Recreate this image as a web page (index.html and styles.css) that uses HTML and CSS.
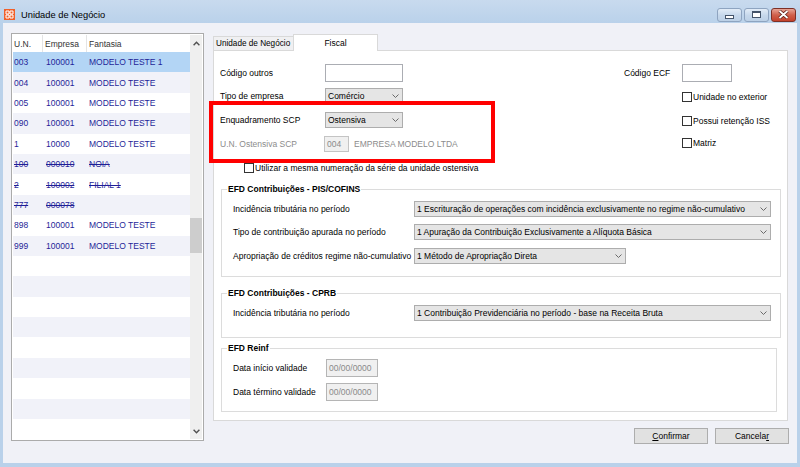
FILE: index.html
```html
<!doctype html>
<html>
<head>
<meta charset="utf-8">
<title>Unidade de Negócio</title>
<link rel="stylesheet" href="styles.css">
</head>
<body>
<div class="janela">
	<div class="titulo">
		<svg class="ico" viewBox="0 0 11 11"><rect width="11" height="11" fill="#f0602a"/><path d="M2 2h3v3H2zM6 2h3v3H6zM2 6h3v3H2zM6 6h3v3H6z" fill="none" stroke="#fff" stroke-width="1"/></svg>
		<span class="titulo-txt">Unidade de Negócio</span>
		<div class="botoes">
			<span class="bt bt-min"><i></i></span>
			<span class="bt bt-max"><i></i></span>
			<span class="bt bt-fechar"><svg width="11" height="9" viewBox="0 0 11 9"><path d="M1.5 1 9.5 8M9.5 1 1.5 8" stroke="#5a1f18" stroke-width="3.4"/><path d="M1.5 1 9.5 8M9.5 1 1.5 8" stroke="#fff" stroke-width="1.8"/></svg></span>
		</div>
	</div>
	<div class="cliente">
		<div class="lista">
			<div class="lista-corpo">
				<div class="cab"><span class="c1">U.N.</span><span class="c2">Empresa</span><span class="c3">Fantasia</span></div>
				<div class="linha sel"><span class="c1">003</span><span class="c2">100001</span><span class="c3">MODELO TESTE 1</span></div>
				<div class="linha"><span class="c1">004</span><span class="c2">100001</span><span class="c3">MODELO TESTE</span></div>
				<div class="linha"><span class="c1">005</span><span class="c2">100001</span><span class="c3">MODELO TESTE</span></div>
				<div class="linha"><span class="c1">090</span><span class="c2">100001</span><span class="c3">MODELO TESTE</span></div>
				<div class="linha"><span class="c1">1</span><span class="c2">10000</span><span class="c3">MODELO TESTE</span></div>
				<div class="linha riscado"><span class="c1">100</span><span class="c2">000010</span><span class="c3">NOIA</span></div>
				<div class="linha riscado"><span class="c1">2</span><span class="c2">100002</span><span class="c3">FILIAL 1</span></div>
				<div class="linha riscado"><span class="c1">777</span><span class="c2">000078</span><span class="c3"></span></div>
				<div class="linha"><span class="c1">898</span><span class="c2">100001</span><span class="c3">MODELO TESTE</span></div>
				<div class="linha"><span class="c1">999</span><span class="c2">100001</span><span class="c3">MODELO TESTE</span></div>
				<div class="linha"></div>
				<div class="linha"></div>
				<div class="linha"></div>
				<div class="linha"></div>
				<div class="linha"></div>
				<div class="linha"></div>
				<div class="linha"></div>
				<div class="linha"></div>
				<div class="linha"></div>
			</div>
			<div class="rolagem">
				<svg class="seta-rol" width="7" height="5" viewBox="0 0 7 5"><path d="M.6 4.2 3.5 1.3 6.4 4.2" fill="none" stroke="#505050" stroke-width="1.4"/></svg>
				<div class="polegar"></div>
				<svg class="seta-rol baixo" width="7" height="5" viewBox="0 0 7 5"><path d="M.6.8 3.5 3.7 6.4.8" fill="none" stroke="#505050" stroke-width="1.4"/></svg>
			</div>
		</div>

		<div class="direita">
			<div class="abas">
				<div class="aba">Unidade de Negócio</div>
				<div class="aba aba-on">Fiscal</div>
			</div>
			<div class="painel">
				<div class="topo">
					<div class="campos">
						<div class="lin l18"><span class="rot">Código outros</span><div class="caixa"></div></div>
						<div class="lin l16 mt6"><span class="rot">Tipo de empresa</span><div class="combo w78"><span>Comércio</span><svg class="seta" width="7" height="4" viewBox="0 0 7 4"><path d="M.5.5 3.5 3.5 6.5.5" fill="none" stroke="#6a6a6a"/></svg></div></div>
						<div class="lin l16 mt8"><span class="rot">Enquadramento SCP</span><div class="combo w78"><span>Ostensiva</span><svg class="seta" width="7" height="4" viewBox="0 0 7 4"><path d="M.5.5 3.5 3.5 6.5.5" fill="none" stroke="#6a6a6a"/></svg></div></div>
						<div class="lin l16 mt8"><span class="rot rot-off">U.N. Ostensiva SCP</span><div class="caixa-off cod">004</div><span class="txt-off">EMPRESA MODELO LTDA</span></div>
						<div class="lin l10 mt11 recuo"><span class="quad"></span><span>Utilizar a mesma numeração da série da unidade ostensiva</span></div>
					</div>
					<div class="lado">
						<span class="rot-ecf">Código ECF</span><div class="caixa ecf"></div>
						<div class="marca m10"><span class="quad"></span><span>Unidade no exterior</span></div>
						<div class="marca m14"><span class="quad"></span><span>Possui retenção ISS</span></div>
						<div class="marca m12"><span class="quad"></span><span>Matriz</span></div>
					</div>
				</div>

				<fieldset class="grupo g-pis">
					<legend>EFD Contribuições - PIS/COFINS</legend>
					<div class="lin l16"><span class="rot-g">Incidência tributária no período</span><div class="combo largo"><span>1 Escrituração de operações com incidência exclusivamente no regime não-cumulativo</span><svg class="seta" width="7" height="4" viewBox="0 0 7 4"><path d="M.5.5 3.5 3.5 6.5.5" fill="none" stroke="#6a6a6a"/></svg></div></div>
					<div class="lin l16 mt7"><span class="rot-g">Tipo de contribuição apurada no período</span><div class="combo largo"><span>1 Apuração da Contribuição Exclusivamente a Alíquota Básica</span><svg class="seta" width="7" height="4" viewBox="0 0 7 4"><path d="M.5.5 3.5 3.5 6.5.5" fill="none" stroke="#6a6a6a"/></svg></div></div>
					<div class="lin l16 mt8"><span class="rot-g">Apropriação de créditos regime não-cumulativo</span><div class="combo medio"><span>1 Método de Apropriação Direta</span><svg class="seta" width="7" height="4" viewBox="0 0 7 4"><path d="M.5.5 3.5 3.5 6.5.5" fill="none" stroke="#6a6a6a"/></svg></div></div>
				</fieldset>

				<fieldset class="grupo g-cprb">
					<legend>EFD Contribuições - CPRB</legend>
					<div class="lin l16"><span class="rot-g">Incidência tributária no período</span><div class="combo largo"><span>1 Contribuição Previdenciária no período - base na Receita Bruta</span><svg class="seta" width="7" height="4" viewBox="0 0 7 4"><path d="M.5.5 3.5 3.5 6.5.5" fill="none" stroke="#6a6a6a"/></svg></div></div>
				</fieldset>

				<fieldset class="grupo g-reinf">
					<legend>EFD Reinf</legend>
					<div class="lin l18"><span class="rot-r">Data início validade</span><div class="caixa-off data">00/00/0000</div></div>
					<div class="lin l18 mt6"><span class="rot-r">Data término validade</span><div class="caixa-off data">00/00/0000</div></div>
				</fieldset>

				<div class="destaque"></div>
			</div>
			<div class="acoes">
				<div class="botao"><span><u>C</u>onfirmar</span></div>
				<div class="botao"><span>Cancela<u>r</u></span></div>
			</div>
		</div>
	</div>
</div>
</body>
</html>
```

FILE: styles.css
```css
*{margin:0; padding:0; box-sizing:border-box;}
body{width:800px; height:467px; overflow:hidden; font-family:"Liberation Sans", Arial, sans-serif; font-size:8.5px; color:#000;}

/* janela */
.janela{width:800px; height:467px; display:flex; flex-direction:column; padding:0 3px 4px; background:linear-gradient(#c8daee, #b9d1ea 24px);}
.titulo{height:23px; flex:none; display:flex; align-items:center; padding-top:6px;}
.ico{width:11px; height:11px; margin-left:1px;}
.titulo-txt{font-size:9.3px; margin-left:6px;}
.botoes{margin-left:auto; margin-right:1px; display:flex; gap:2px;}
.bt{width:25px; height:14px; border:1px solid #8ea4c0; border-radius:3px; background:linear-gradient(#e2ecf7, #c5d7eb 55%, #bcd0e6); display:flex; align-items:center; justify-content:center;}
.bt-min i{width:9px; height:4px; border:1px solid #44546a; background:#fff; margin-top:4px;}
.bt-max i{width:9px; height:7px; border:1px solid #44546a; border-top-width:2px; background:#fff;}
.bt-fechar{border-color:#7d3026; background:linear-gradient(#e8a596, #d0604b 50%, #c4412c);}

/* area cliente */
.cliente{flex:1; background:#f0f1f7; display:flex; align-items:flex-start; padding:10px 0 0 8px;}

/* lista */
.lista{width:193px; height:408px; border:1px solid #ababab; background:#fff; padding:1px; display:flex;}
.lista-corpo{width:177px; height:100%; overflow:hidden;}
.cab{height:17px; display:flex; color:#333;}
.cab span{display:flex; align-items:center;}
.cab .c1, .cab .c2{border-right:1px solid #e4e4e4;}
.c1{width:30px; padding-left:1px;}
.c2{width:44px; padding-left:3px;}
.c3{flex:1; padding-left:2px;}
.cab .c2{padding-left:2px;}
.linha{height:20.4px; display:flex; align-items:center; color:#1f1f98;}
.linha:nth-child(odd){background:#f1f2f9;}
.linha.sel{background:#b3d5f5;}
.riscado{text-decoration:line-through;}
.rolagem{width:12px; height:100%; background:#efefef; display:flex; flex-direction:column; align-items:center;}
.seta-rol{margin-top:6px; flex:none;}
.polegar{width:12px; height:35px; background:#cdcdcd; margin-top:172px;}
.seta-rol.baixo{margin-top:auto; margin-bottom:5px;}

/* lado direito */
.direita{width:576px; margin-left:9px; margin-top:1px; display:flex; flex-direction:column;}
.abas{height:16px; display:flex; align-items:flex-end;}
.aba{width:81px; height:14px; padding-left:2px; border:1px solid #d9d9d9; border-bottom:none; background:#f0f0f2; display:flex; align-items:center; white-space:nowrap; overflow:hidden; font-size:8.2px;}
.aba-on{width:85px; height:17px; padding:0 0 1px; margin-bottom:-1px; margin-left:-1px; background:#fff; justify-content:center; position:relative; z-index:1; font-size:8.5px;}
.painel{width:575px; height:371px; background:#fff; border:1px solid #d9d9d9; padding:13px 6px 0; position:relative;}

.topo{display:flex; align-items:flex-start;}
.campos{display:flex; flex-direction:column;}
.lin{display:flex; align-items:center; white-space:nowrap;}
.l18{height:18px;}
.l16{height:16px;}
.l10{height:10px;}
.mt6{margin-top:6px;}
.mt7{margin-top:7px;}
.mt8{margin-top:8px;}
.mt11{margin-top:11px;}
.rot{width:105px;}
.rot-off{width:104px; color:#8c8c8c;}
.txt-off{color:#8c8c8c; margin-left:5px;}
.recuo{padding-left:24px;}

.caixa{width:78px; height:18px; border:1px solid #abadb3; background:#fff;}
.caixa-off{height:16px; border:1px solid #c4c4c4; background:#f0f0f0; color:#8a8a8a; display:flex; align-items:center; padding-left:2px;}
.cod{width:25px;}
.data{width:52px; height:18px; border-color:#b5b5b5;}
.combo{height:16px; background:#e5e5e5; border:1px solid #adadad; display:flex; align-items:center; justify-content:space-between; padding:0 3px 0 2px; white-space:nowrap;}
.w78{width:78px;}
.largo{width:357px;}
.medio{width:212px;}
.seta{flex:none;}

.quad{width:10px; height:10px; border:1px solid #333; background:#fff; margin-right:1px; flex:none;}

.lado{margin-left:auto; width:157px; display:grid; grid-template-columns:58px 1fr; align-items:center;}
.ecf{width:50px;}
.marca{grid-column:2; display:flex; align-items:center; height:10px; white-space:nowrap;}
.m10{margin-top:10px;}
.m14{margin-top:14px;}
.m12{margin-top:12px;}

/* grupos */
.grupo{border:1px solid #dcdcdc; margin:11px 0 0 1px; padding:7px 9px 12px 11px;}
.grupo legend{font-weight:bold; line-height:10px; padding:0 1px; margin-left:-6px;}
.g-cprb{padding-bottom:16px;}
.g-reinf{margin-top:5px; padding-top:6px; padding-bottom:10px; margin-right:4px;}
.rot-g{width:181px;}
.rot-r{width:93px;}

.destaque{position:absolute; left:-5px; top:50px; width:286px; height:62px; border:4px solid #f00;}

.acoes{display:flex; justify-content:flex-end; gap:7px; margin-top:7px;}
.botao{width:74px; height:16px; background:#e1e1e1; border:1px solid #adadad; display:flex; align-items:center; justify-content:center;}
```
